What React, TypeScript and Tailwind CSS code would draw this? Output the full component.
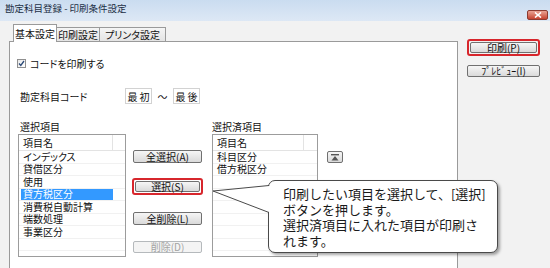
import React from "react";

const leftItems = ["インデックス", "貸借区分", "使用", "貸方税区分", "消費税自動計算", "端数処理", "事業区分", "", ""];
const rightItems = ["科目区分", "借方税区分", "", "", "", "", "", "", ""];

const btn =
  "flex items-center justify-center border border-[#707070] rounded-[2px] bg-gradient-to-b from-[#f6f6f6] to-[#dadada] text-[10px] leading-none text-[#111]";

const ListBox = ({
  items,
  selected,
  width,
  colWidth,
}: {
  items: string[];
  selected?: number;
  width: string;
  colWidth: string;
}) => (
  <div className={`${width} h-[123px] border border-[#9c9c9c] bg-white overflow-hidden`}>
    <div className="flex h-[16px] border-b border-[#e3e3e3]">
      <div className={`${colWidth} border-r border-[#e3e3e3] pl-[4px] flex items-center text-[10px]`}>
        項目名
      </div>
      <div className="flex-1" />
    </div>
    {items.map((item, i) => (
      <div key={i} className="flex h-[12.5px] border-b border-[#f1f1f1]">
        <div className={`${colWidth} flex items-center`}>
          <div
            className={`ml-[2px] h-full flex-1 flex items-center pl-[2px] text-[10px] leading-none ${
              i === selected ? "bg-[#3399ff] text-white" : "text-[#111]"
            }`}
          >
            {item}
          </div>
        </div>
      </div>
    ))}
  </div>
);

const bubbleLines = [
  "印刷したい項目を選択して、[選択]",
  "ボタンを押します。",
  "選択済項目に入れた項目が印刷さ",
  "れます。",
];

export default function App() {
  return (
    <div className="relative w-[550px] h-[268px] overflow-hidden bg-[#f2f2f2] text-[#111] font-['Noto_Sans_CJK_JP',sans-serif] [font-feature-settings:'palt']">
      {/* title bar */}
      <div className="flex items-start h-[21px] bg-gradient-to-b from-[#cadcf0] to-[#dde8f5]">
        <span className="mt-[2px] ml-[5px] text-[9.5px] leading-[12px] text-[#1c2f45]">
          勘定科目登録 - 印刷条件設定
        </span>
        <div className="ml-auto mt-[10px] mr-[2px] w-[21px] h-[10px] rounded-[2px] border border-[#8c3b30] bg-gradient-to-b from-[#e9a394] to-[#c5412f] flex items-center justify-center">
          <svg width="8" height="6" viewBox="0 0 8 6">
            <path d="M1 0.5 L7 5.5 M7 0.5 L1 5.5" stroke="white" strokeWidth="1.6" />
          </svg>
        </div>
      </div>

      <div className="flex">
        {/* left: tabs + panel */}
        <div className="ml-[9px] w-[449px]">
          <div className="flex items-end h-[20px] pl-[4px]">
            <div className="relative z-10 -mb-px h-[18px] w-[44px] border border-b-0 border-[#9a9a9a] bg-white flex items-center justify-center text-[10px]">
              基本設定
            </div>
            <div className="h-[14px] w-[43px] border border-b-0 border-l-0 border-[#9a9a9a] bg-gradient-to-b from-[#f5f5f5] to-[#e4e4e4] flex items-center justify-center text-[10px]">
              印刷設定
            </div>
            <div className="h-[14px] w-[66px] border border-b-0 border-l-0 border-[#9a9a9a] bg-gradient-to-b from-[#f5f5f5] to-[#e4e4e4] flex items-center justify-center text-[10px]">
              プリンタ設定
            </div>
          </div>
          <div className="h-[240px] border border-[#9a9a9a] bg-white flex flex-col">
            {/* checkbox */}
            <div className="mt-[16px] ml-[7px] flex items-center h-[11px]">
              <div className="w-[9px] h-[9px] border border-[#8f8f8f] bg-gradient-to-br from-[#e8e8e8] to-white flex items-center justify-center">
                <svg width="7" height="7" viewBox="0 0 7 7">
                  <path d="M1 3.5 L2.8 5.5 L6 1" fill="none" stroke="#2b4a78" strokeWidth="1.3" />
                </svg>
              </div>
              <span className="ml-[4px] text-[10px]">コードを印刷する</span>
            </div>
            {/* code range */}
            <div className="mt-[19px] ml-[10px] flex items-center h-[16px] text-[10px]">
              <span className="w-[105px]">勘定科目コード</span>
              <div className="w-[27px] h-[16px] border border-[#d2d2d2] flex items-center justify-center">最 初</div>
              <span className="w-[21px] text-center">～</span>
              <div className="w-[27px] h-[16px] border border-[#d2d2d2] flex items-center justify-center">最 後</div>
            </div>
            {/* labels */}
            <div className="mt-[16px] ml-[10px] flex items-center h-[12px] text-[10px]">
              <span className="w-[192px]">選択項目</span>
              <span>選択済項目</span>
            </div>
            {/* lists */}
            <div className="mt-[2px] ml-[8px] flex items-start">
              <ListBox items={leftItems} selected={3} width="w-[108px]" colWidth="w-[94px]" />
              <div className="ml-[6px] w-[71px] flex flex-col">
                <div className={`${btn} mt-[16px] ml-px w-[69px] h-[13px]`}>全選択(A)</div>
                <div className="mt-[15px] w-[71px] h-[17px] border-2 border-[#d7262c] rounded-[3px] p-px">
                  <div className={`${btn} w-full h-full`}>選択(S)</div>
                </div>
                <div className={`${btn} mt-[17px] ml-px w-[69px] h-[13px]`}>全削除(L)</div>
                <div className="mt-[16px] ml-px w-[69px] h-[12px] flex items-center justify-center border border-[#b5b9bc] rounded-[2px] bg-[#f4f4f4] text-[10px] leading-none text-[#a3a3a3]">
                  削除(D)
                </div>
              </div>
              <div className="ml-[9px]">
                <ListBox items={rightItems} width="w-[106px]" colWidth="w-[91px]" />
              </div>
              <div className={`${btn} ml-[9px] mt-[17px] w-[16px] h-[12px]`}>
                <svg width="8" height="7" viewBox="0 0 8 7">
                  <rect x="0" y="0" width="8" height="1.4" fill="#555" />
                  <path d="M4 2 L7.5 6.5 L0.5 6.5 Z" fill="#555" />
                </svg>
              </div>
            </div>
          </div>
        </div>

        {/* right: buttons */}
        <div className="ml-[9px] pt-[18px] flex flex-col w-[73px]">
          <div className="h-[17px] border-2 border-[#d7262c] rounded-[3px] p-px">
            <div className={`${btn} w-full h-full`}>印刷(P)</div>
          </div>
          <div className={`${btn} mt-[9px] h-[12px]`}>ﾌﾟﾚﾋﾞｭｰ(I)</div>
        </div>
      </div>

      {/* callout */}
      <div className="absolute left-[268px] top-[180px] w-[230px] h-[73px] rounded-[7px] border border-[#4a4a4a] bg-white shadow-[2px_2px_3px_rgba(0,0,0,0.35)] pl-[14px] pt-[5px] text-[13px] leading-[15.5px] text-[#1a1a1a] [font-feature-settings:normal]">
        {bubbleLines.map((line) => (
          <div key={line} className="whitespace-nowrap">
            {line}
          </div>
        ))}
      </div>
      <svg className="absolute left-[212px] top-[184px]" width="60" height="30" viewBox="0 0 60 30">
        <path d="M58 2 L56.5 2 L1 7 L56.5 28 L58 28 Z" fill="white" />
        <path d="M57 1.5 L1 7 L57 28.5" fill="none" stroke="#4a4a4a" strokeWidth="1" />
      </svg>
    </div>
  );
}
